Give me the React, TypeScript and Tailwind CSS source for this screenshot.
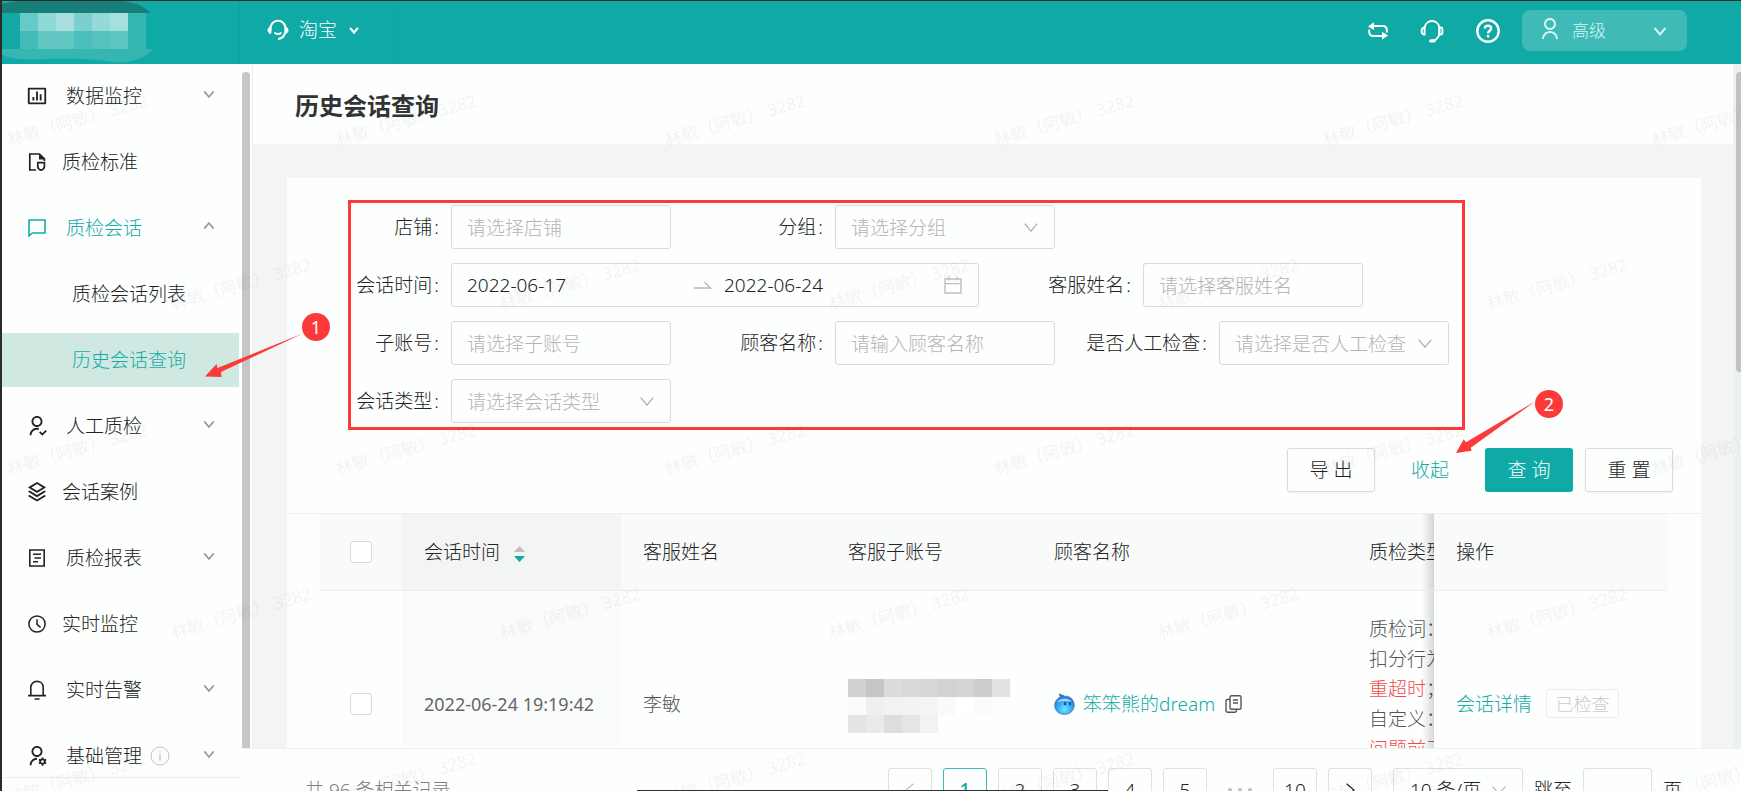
import type { ReactNode } from "react";
import {
  RiBarChartBoxLine,
  RiStackLine,
  RiUserFollowLine,
  RiUserLine,
  RiUserSettingsLine,
} from "react-icons/ri";

const Chevron = ({ className }: { className: string }) => (
  <svg viewBox="0 0 14 14" className={className} fill="none" stroke="currentColor">
    <path d="M1.5 4 L7 10.5 L12.5 4" />
  </svg>
);

const FileShieldIcon = () => (
  <svg viewBox="0 0 18 18" className="h-[18px] w-[18px]" fill="none" stroke="currentColor" strokeWidth="1.7">
    <path d="M8 17 H1.8 V1 H11.5 L16.4 5.8 V8" />
    <path d="M11 1 L16.8 6.5 H11 Z" fill="currentColor" stroke="none" />
    <path d="M9.8 9.6 H16.4 V13.4 C16.4 15.4 14.6 16.6 13.1 17.2 C11.6 16.6 9.8 15.4 9.8 13.4 Z" />
  </svg>
);

const ChatIcon = () => (
  <svg viewBox="0 0 18 18" className="h-[18px] w-[18px]" fill="none" stroke="currentColor" strokeWidth="1.6">
    <path d="M1 1 H17 V14 H4.4 L1 16.8 Z" />
  </svg>
);

const ReportIcon = () => (
  <svg viewBox="0 0 18 18" className="h-[18px] w-[18px]" fill="none" stroke="currentColor" strokeWidth="1.6">
    <path d="M1.8 1 H16.2 V17 H1.8 Z" />
    <path d="M5 5.2 H13 M6.5 9 H13 M5 12.8 H10" />
  </svg>
);

const ClockIcon = () => (
  <svg viewBox="0 0 18 18" className="h-[18px] w-[18px]" fill="none" stroke="currentColor" strokeWidth="1.5">
    <circle cx="9" cy="9" r="8.1" />
    <path d="M9 4.2 V9.4 L12.6 12.4" />
  </svg>
);

const BellIcon = () => (
  <svg viewBox="0 0 20 20" className="h-5 w-5 shrink-0" fill="none" stroke="currentColor" strokeWidth="1.6">
    <path d="M3.8 15 V7.4 C3.8 3.8 6.4 1.4 10 1.4 C13.6 1.4 16.2 3.8 16.2 7.4 V15" />
    <path d="M1 15.6 H19 M7.5 19 H12.5" />
  </svg>
);

const InfoIcon = () => (
  <svg viewBox="0 0 20 20" className="h-5 w-5 text-[#c4c4c4]" fill="none" stroke="currentColor">
    <circle cx="10" cy="10" r="9" />
    <path d="M10 8.5 V15 M10 5 V6.6" strokeWidth="1.4" />
  </svg>
);

const HeadsetIcon = () => (
  <svg viewBox="0 0 22 22" className="h-[22px] w-[22px]" fill="none" stroke="currentColor" strokeWidth="2">
    <path d="M3.5 12 C2.6 5.5 6.6 1.8 11 1.8 C15.4 1.8 19.4 5.5 18.5 12 C17.8 16.4 15.4 19.6 11 20" />
    <path d="M3.8 8 V14.5 C2 14.5 1 13 1 11.2 C1 9.5 2 8 3.8 8 Z M18.2 8 V14.5 C20 14.5 21 13 21 11.2 C21 9.5 20 8 18.2 8 Z" fill="currentColor" strokeWidth="1" />
    <path d="M7.5 13.5 C9 15.6 13 15.6 14.5 13.5" />
  </svg>
);

const SupportIcon = () => (
  <svg viewBox="0 0 24 24" className="h-6 w-6" fill="none" stroke="currentColor" strokeWidth="1.9">
    <path d="M4.6 9 C5 4.6 8.3 2 12 2 C15.7 2 19 4.6 19.4 9 V13.5 C19.2 17.5 17 20.6 13.5 21.6" />
    <path d="M4.6 8.5 V15.5 C2.6 15.5 1.6 14 1.6 12 C1.6 10 2.6 8.5 4.6 8.5 Z M19.4 8.5 H21 Q22.4 8.5 22.4 10 V14 Q22.4 15.5 21 15.5 H19.4 Z" />
    <path d="M10.8 21.9 H14" strokeWidth="3.4" strokeLinecap="round" />
  </svg>
);

const SwapIcon = () => (
  <svg viewBox="0 0 20 18" className="h-[18px] w-5" fill="none" stroke="currentColor" strokeWidth="2">
    <path d="M3 4 H14.5 Q18.8 4 18.8 8 V10.5" />
    <path d="M17 14 H5.5 Q1.2 14 1.2 10 V7.5" />
    <path d="M0 4.4 L6 0.2 V8 Z M20 13.6 L14 9.8 V17.6 Z" fill="currentColor" stroke="none" />
  </svg>
);

const HelpIcon = () => (
  <svg viewBox="0 0 24 24" className="h-6 w-6" fill="none" stroke="currentColor" strokeWidth="2.4">
    <circle cx="12" cy="12" r="10.7" />
    <path d="M8.9 9.6 C8.9 5.6 15.1 5.7 15.1 9.5 C15.1 11.8 12 11.8 12 14.4" />
    <path d="M12 16 V18.4" />
  </svg>
);

const CalendarIcon = () => (
  <svg viewBox="0 0 18 18" className="h-[18px] w-[18px] shrink-0 text-[#bfbfbf]" fill="none" stroke="currentColor" strokeWidth="1.4">
    <path d="M1 3 H17 V17 H1 Z M1 7.6 H17 M5 0.5 V4.6 M13 0.5 V4.6" />
  </svg>
);

const CopyIcon = () => (
  <svg viewBox="0 0 17 18" className="h-[18px] w-[17px]" fill="none" stroke="currentColor" strokeWidth="1.4">
    <rect x="5" y="0.8" width="11" height="13.4" rx="1.5" />
    <path d="M5 4.5 H2.4 Q1 4.5 1 6 V15.8 Q1 17.2 2.4 17.2 H10 Q11.4 17.2 11.4 15.8 V14.2 M8 5 H13 M8 8 H13" />
  </svg>
);

const WangwangIcon = () => (
  <svg viewBox="0 0 21 22" className="h-[22px] w-[21px]">
    <defs>
      <radialGradient id="drop" cx="0.5" cy="0.75" r="0.7">
        <stop offset="0" stopColor="#6fe6ff" />
        <stop offset="0.6" stopColor="#2f9df2" />
        <stop offset="1" stopColor="#2767c4" />
      </radialGradient>
    </defs>
    <path d="M5.5 0.6 C6.5 2.4 9 1.6 10.5 3.2 C16 2.6 20.2 6.8 20.2 12 C20.2 17.8 15.8 21.4 10.4 21.4 C5 21.4 0.7 17.8 0.7 12.2 C0.7 8.6 3.2 5.4 6.4 4 C5.8 2.8 5.2 2 5.5 0.6 Z" fill="url(#drop)" stroke="#3b6ea8" strokeWidth="0.7" />
    <path d="M3.2 9.4 C5 5 15 4.2 17.8 8.8 C13 7.6 8 7.8 3.2 9.4 Z" fill="#a9d6fb" />
    <path d="M11 9.2 V12 M15.8 9.2 V12" stroke="#123c86" strokeWidth="1.7" />
  </svg>
);

const logoCells = [
  ["#12a9a5", "#66cbc8", "#90d8d6", "#a8dfde", "#7bd0ce", "#94dad7", "#a5e0df", "#35b6b3"],
  ["#12a9a5", "#45bbb7", "#63c7c3", "#63c7c3", "#4bbfbc", "#56c2be", "#60c6c4", "#35b6b3"],
];

const Logo = () => (
  <svg viewBox="0 0 152 63" className="block h-[63px] w-[152px]">
    <path d="M0 3 Q18 -2 36 0 H118 Q138 1 149 12 H0 Z" fill="#177e7a" />
    <path d="M0 48 H151 Q138 63 112 61 Q80 56 46 58 Q12 60 0 54 Z" fill="#35b6b3" />
    {logoCells.map((row, r) =>
      row.map((fill, c) => (
        <rect key={`${r}-${c}`} x={c * 18} y={12 + r * 18} width="18" height="18" fill={fill} shapeRendering="crispEdges" />
      ))
    )}
  </svg>
);

const accountCells = [
  ["#d1d1d1", "#c6c6c6", "#dcdcdc", "#d9d9d9", "#d7d7d7", "#d2d2d2", "#d4d4d4", "#cdcdcd", "#e2e2e2"],
  ["#fbfbfb", "#efefef", "#f2f2f2", "#f3f3f3", "#f4f4f4", "#fafafa", "#ffffff", "#fbfbfb", "#fdfdfd"],
  ["#e4e4e4", "#eaeaea", "#dddddd", "#e6e4e4", "#f2f2f2"],
];

const MaskedAccount = () => (
  <svg viewBox="0 0 162 54" className="mt-1 block h-[54px] w-[162px]" shapeRendering="crispEdges">
    {accountCells.map((row, r) =>
      row.map((fill, c) => (
        <rect key={`${r}-${c}`} x={c * 18} y={r * 18} width="18" height="18" fill={fill} />
      ))
    )}
  </svg>
);

interface MenuItemProps {
  icon: ReactNode;
  label: string;
  arrow?: "up" | "down";
  info?: boolean;
  active?: boolean;
}

const MenuItem = ({ icon, label, arrow, info, active }: MenuItemProps) => (
  <li>
    <a
      href="#"
      className={
        active
          ? "flex h-[54px] items-center pl-[26px] pr-[25px] text-[#16aaa6]"
          : "flex h-[54px] items-center pl-[26px] pr-[25px] text-[#222]"
      }
    >
      <span className="flex w-[18px] justify-center">{icon}</span>
      <span className={arrow ? "ml-5" : "ml-4"}>{label}</span>
      {info && (
        <span className="ml-2">
          <InfoIcon />
        </span>
      )}
      {arrow && (
        <Chevron
          className={
            arrow === "up"
              ? "mb-1 ml-auto h-3 w-3 rotate-180 stroke-2 text-[#999]"
              : "mb-1 ml-auto h-3 w-3 stroke-2 text-[#999]"
          }
        />
      )}
    </a>
  </li>
);

interface FieldProps {
  id: string;
  label: string;
  first?: boolean;
  children: ReactNode;
}

const Field = ({ id, label, first, children }: FieldProps) => (
  <div className="flex h-11 items-center">
    <label
      htmlFor={id}
      className={first ? "w-[100px] shrink-0 pr-3 text-right" : "w-[164px] shrink-0 pr-3 text-right"}
    >
      {label}
      <span className="ml-0.5">:</span>
    </label>
    {children}
  </div>
);

const TextBox = ({ id, placeholder }: { id: string; placeholder: string }) => (
  <input
    id={id}
    placeholder={placeholder}
    className="h-11 w-[220px] rounded-[3px] border border-[#d9dbdb] bg-transparent px-[15px] pt-0.5 placeholder:text-[#b5b5b5]"
  />
);

const SelectBox = ({ id, placeholder, wide }: { id: string; placeholder: string; wide?: boolean }) => (
  <div className="relative">
    <select
      id={id}
      className={
        wide
          ? "h-11 w-[230px] appearance-none rounded-[3px] border border-[#d9dbdb] bg-transparent px-[15px] pt-0.5 text-[#b5b5b5]"
          : "h-11 w-[220px] appearance-none rounded-[3px] border border-[#d9dbdb] bg-transparent px-[15px] pt-0.5 text-[#b5b5b5]"
      }
    >
      <option>{placeholder}</option>
    </select>
    <Chevron className="pointer-events-none absolute right-4 top-[14px] h-4 w-4 text-[#a8a8a8]" />
  </div>
);

// repeated user name over the whole page
const Watermark = () => (
  <svg className="pointer-events-none absolute inset-0 z-30 h-full w-full" aria-hidden="true">
    <defs>
      <pattern id="wm" width="329" height="329" patternUnits="userSpaceOnUse">
        <g fill="#000" fillOpacity="0.042" fontSize="17" fontWeight="400" style={{ whiteSpace: "pre" }}>
          <text transform="translate(7 145) rotate(-16)">林敏（阿敏） 3282</text>
          <text transform="translate(171 309) rotate(-16)">林敏（阿敏） 3282</text>
        </g>
      </pattern>
    </defs>
    <rect y="64" width="100%" height="100%" fill="url(#wm)" />
  </svg>
);

const pages = ["1", "2", "3", "4", "5"];

export default function App() {
  return (
    <div className="relative flex h-screen flex-col overflow-hidden border-l-2 border-t border-[#2a2b2b] bg-[#fdfefe] font-['Noto_Sans','Noto_Sans_CJK_SC',sans-serif] text-[19px] font-light leading-[30px] text-[#222]">
      <header className="flex h-[63px] shrink-0 bg-[#0fa9a6] text-white">
        <div className="w-[238px] border-r border-[#0da19e]">
          <Logo />
        </div>
        <button className="flex w-[155px] items-center border-r border-[#0ea5a2] pb-1.5 pl-[27px]">
          <HeadsetIcon />
          <span className="ml-2.5">淘宝</span>
          <Chevron className="ml-3 h-2.5 w-2.5 stroke-[3px]" />
        </button>
        <div className="ml-auto flex items-center gap-8 pb-1 pr-[54px]">
          <button aria-label="切换">
            <SwapIcon />
          </button>
          <button aria-label="客服">
            <SupportIcon />
          </button>
          <button aria-label="帮助">
            <HelpIcon />
          </button>
          <button className="-ml-2.5 flex h-[41px] w-[165px] items-center rounded-lg bg-[#40bab7] px-4 text-[17px] text-[#d3f6f4]">
            <RiUserLine className="mb-1 h-6 w-6" />
            <span className="ml-2.5">高级</span>
            <Chevron className="ml-auto mr-1 h-3.5 w-3.5 stroke-2" />
          </button>
        </div>
      </header>

      <div className="flex min-h-0 flex-1">
        <aside className="relative z-20 flex w-[238px] shrink-0 flex-col">
          <nav className="min-h-0 flex-1 pt-[5px]">
            <ul className="flex flex-col gap-3">
              <MenuItem icon={<RiBarChartBoxLine className="h-[22px] w-[22px] shrink-0" />} label="数据监控" arrow="down" />
              <MenuItem icon={<FileShieldIcon />} label="质检标准" />
              <MenuItem icon={<ChatIcon />} label="质检会话" arrow="up" active />
              <li>
                <a href="#" className="flex h-[54px] items-center pl-[70px]">
                  质检会话列表
                </a>
              </li>
              <li className="relative">
                <a href="#" className="mr-px flex h-[54px] items-center bg-[#d0e8e2] pl-[70px] text-[#16aaa6]">
                  历史会话查询
                </a>
                {/* step 1 */}
                <svg viewBox="0 0 104 46" className="absolute left-[203px] top-0 h-[46px] w-[104px]">
                  <path d="M0 43.5 L11.5 31 L12.5 35 L99 0 L16 39 L16.5 44 Z" fill="#fc3a3a" />
                </svg>
                <span className="absolute -top-5 left-[300px] flex h-7 w-7 items-center justify-center rounded-full bg-[#fc3a3a] text-[18px] font-normal text-white">
                  1
                </span>
              </li>
              <MenuItem icon={<RiUserFollowLine className="h-[22px] w-[22px] shrink-0" />} label="人工质检" arrow="down" />
              <MenuItem icon={<RiStackLine className="h-[22px] w-[22px] shrink-0" />} label="会话案例" />
              <MenuItem icon={<ReportIcon />} label="质检报表" arrow="down" />
              <MenuItem icon={<ClockIcon />} label="实时监控" />
              <MenuItem icon={<BellIcon />} label="实时告警" arrow="down" />
              <MenuItem icon={<RiUserSettingsLine className="h-[22px] w-[22px] shrink-0" />} label="基础管理" arrow="down" info />
            </ul>
          </nav>
          <div className="h-[14px] border-t border-[#ececec]" />
        </aside>

        <div className="flex min-w-0 flex-1 flex-col">
          <div className="flex min-h-0 flex-1">
            <div className="w-[13px] shrink-0 border-r border-[#eeefef] px-0.5 pt-2">
              <div className="h-full w-2 rounded-t bg-[#c6c6c6]" />
            </div>

            <main className="min-w-0 flex-1 overflow-hidden bg-[#f3f4f4]">
              <div className="flex h-20 items-center bg-[#fdfefe] pl-[42px] pt-1">
                <h1 className="text-[24px] font-bold text-[#333]">历史会话查询</h1>
              </div>

              <section className="ml-[34px] mr-8 mt-[34px] bg-[#fdfefe]">
                <form className="border-b border-[#eeefef] pb-[21px] pl-[61px] pr-7 pt-[22px]">
                  <div className="flex w-fit flex-col gap-[14px] border-[3px] border-[#fc3a3a] pb-1 pr-[13px] pt-0.5">
                    <div className="flex">
                      <Field id="shop" label="店铺" first>
                        <TextBox id="shop" placeholder="请选择店铺" />
                      </Field>
                      <Field id="group" label="分组">
                        <SelectBox id="group" placeholder="请选择分组" />
                      </Field>
                    </div>
                    <div className="flex">
                      <Field id="start" label="会话时间" first>
                        <div className="flex h-11 w-[528px] items-center rounded-[3px] border border-[#d9dbdb] px-[15px]">
                          <input id="start" defaultValue="2022-06-17" className="w-[227px] bg-transparent" />
                          <svg viewBox="0 0 18 10" className="h-2.5 w-[18px] shrink-0" fill="none" stroke="#b9b9b9" strokeWidth="1.4">
                            <path d="M0 8 H16.4 L10.5 2" />
                          </svg>
                          <input aria-label="结束时间" defaultValue="2022-06-24" className="ml-3 w-[220px] bg-transparent" />
                          <CalendarIcon />
                        </div>
                      </Field>
                      <Field id="staff" label="客服姓名">
                        <TextBox id="staff" placeholder="请选择客服姓名" />
                      </Field>
                    </div>
                    <div className="flex">
                      <Field id="sub" label="子账号" first>
                        <TextBox id="sub" placeholder="请选择子账号" />
                      </Field>
                      <Field id="customer" label="顾客名称">
                        <TextBox id="customer" placeholder="请输入顾客名称" />
                      </Field>
                      <Field id="manual" label="是否人工检查">
                        <SelectBox id="manual" placeholder="请选择是否人工检查" wide />
                      </Field>
                    </div>
                    <Field id="type" label="会话类型" first>
                      <SelectBox id="type" placeholder="请选择会话类型" />
                    </Field>
                  </div>

                  <div className="mt-[18px] flex justify-end gap-3">
                    <button type="button" className="h-11 w-[88px] rounded-[3px] border border-[#d9dbdb] shadow-xs">
                      导 出
                    </button>
                    <div className="relative">
                      <button type="button" className="h-11 w-[86px] text-[#16aaa6]">
                        收起
                      </button>
                      {/* step 2 */}
                      <svg viewBox="0 0 80 52" className="absolute -top-[47px] left-[69px] h-[52px] w-20">
                        <path d="M0 52 L7.7 38.3 L10 41.3 L79.7 0 L14.7 46.7 L15.7 49.7 Z" fill="#fc3a3a" />
                      </svg>
                      <span className="absolute -top-[58px] left-[148px] flex h-7 w-7 items-center justify-center rounded-full bg-[#fc3a3a] text-[18px] font-normal text-white">
                        2
                      </span>
                    </div>
                    <button type="button" className="h-11 w-[88px] rounded-[3px] bg-[#0fa9a6] text-white">
                      查 询
                    </button>
                    <button type="button" className="h-11 w-[88px] rounded-[3px] border border-[#d9dbdb] shadow-xs">
                      重 置
                    </button>
                  </div>
                </form>

                <div className="overflow-hidden px-[33px]">
                  <table className="w-full table-fixed text-left">
                    <colgroup>
                      <col className="w-[82px]" />
                      <col className="w-[219px]" />
                      <col className="w-[205px]" />
                      <col className="w-[206px]" />
                      <col className="w-[315px]" />
                      <col />
                      <col className="w-[234px]" />
                    </colgroup>
                    <thead>
                      <tr className="h-[76px] border-b border-[#ececec] bg-[#f9fafa]">
                        <th className="pl-[30px]">
                          <input type="checkbox" aria-label="全选" className="block h-[22px] w-[22px] appearance-none rounded-[3px] border border-[#d9dbdb] bg-white" />
                        </th>
                        <th className="bg-[#f3f4f4] pl-[22px] font-light">
                          <span className="flex items-center">
                            会话时间
                            <svg viewBox="0 0 11 18" className="ml-[14px] mt-1 h-[18px] w-[11px]">
                              <path d="M0 7 L5.5 1 L11 7 Z" fill="#bfbfbf" />
                              <path d="M0 11 L5.5 17 L11 11 Z" fill="#0fa9a6" />
                            </svg>
                          </span>
                        </th>
                        <th className="pl-[22px] font-light">客服姓名</th>
                        <th className="pl-[22px] font-light">客服子账号</th>
                        <th className="pl-[22px] font-light">顾客名称</th>
                        <th className="overflow-hidden whitespace-nowrap pl-[22px] font-light">质检类型</th>
                        <th className="relative bg-[#f9fafa] pl-[22px] font-light">
                          <span className="absolute inset-y-0 -left-3 w-3 bg-gradient-to-l from-black/15 to-transparent" />
                          操作
                        </th>
                      </tr>
                    </thead>
                    <tbody>
                      <tr className="text-[#555]">
                        <td className="pl-[30px]">
                          <input type="checkbox" aria-label="选择会话" className="block h-[22px] w-[22px] appearance-none rounded-[3px] border border-[#d9dbdb] bg-white" />
                        </td>
                        <td className="bg-[#fafbfb] pl-[22px] text-[18px] font-normal text-[#666]">2022-06-24 19:19:42</td>
                        <td className="pl-[22px]">李敏</td>
                        <td className="pl-[22px]">
                          <MaskedAccount />
                        </td>
                        <td className="pl-[22px]">
                          <span className="flex items-center">
                            <WangwangIcon />
                            <a href="#" className="ml-2 text-[#16aaa6]">
                              笨笨熊的dream
                            </a>
                            <button aria-label="复制" className="ml-2.5">
                              <CopyIcon />
                            </button>
                          </span>
                        </td>
                        <td className="overflow-hidden whitespace-nowrap py-[23px] pl-[22px]">
                          质检词：无
                          <br />
                          扣分行为：
                          <br />
                          <span className="text-[#f24b4b]">重超时</span>；
                          <br />
                          自定义：
                          <br />
                          <span className="text-[#f24b4b]">问题前三</span>
                          <br />
                          &nbsp;
                        </td>
                        <td className="relative pl-[22px]">
                          <span className="absolute inset-y-0 -left-3 w-3 bg-gradient-to-l from-black/15 to-transparent" />
                          <span className="flex items-center">
                            <a href="#" className="text-[#16aaa6]">
                              会话详情
                            </a>
                            <button disabled className="ml-[14px] flex h-[29px] w-[73px] items-center justify-center rounded-[3px] border border-[#ebecec] text-[18px] text-[#cccccc]">
                              已检查
                            </button>
                          </span>
                        </td>
                      </tr>
                    </tbody>
                  </table>
                </div>
              </section>
            </main>

            <div className="w-2 shrink-0 overflow-hidden bg-[#edf1f4] pl-[3px] pt-2">
              <div className="h-[300px] w-2 rounded bg-[#c1c1c1]" />
            </div>
          </div>

          <footer className="flex h-[43px] shrink-0 items-start justify-between overflow-hidden border-t border-[#eeefef] pl-[65px] pr-[59px] pt-[19px]">
            <span className="flex h-11 items-center text-[#808080]">共 96 条相关记录</span>
            <div className="flex h-11 items-center gap-[11px]">
              <button aria-label="上一页" className="flex h-11 w-11 items-center justify-center rounded-[3px] border border-[#dfe0e0] text-[#bfbfbf]">
                <Chevron className="h-4 w-4 rotate-90" />
              </button>
              {pages.map((page) => (
                <button
                  key={page}
                  className={
                    page === "1"
                      ? "h-11 w-11 rounded-[3px] border border-[#3cb9b5] font-medium text-[#16aaa6]"
                      : "h-11 w-11 rounded-[3px] border border-[#dfe0e0]"
                  }
                >
                  {page}
                </button>
              ))}
              <span className="flex w-11 justify-center gap-1.5">
                <i className="h-1 w-1 rounded-full bg-[#bfbfbf]" />
                <i className="h-1 w-1 rounded-full bg-[#bfbfbf]" />
                <i className="h-1 w-1 rounded-full bg-[#bfbfbf]" />
              </span>
              <button className="h-11 w-11 rounded-[3px] border border-[#dfe0e0]">10</button>
              <button aria-label="下一页" className="flex h-11 w-11 items-center justify-center rounded-[3px] border border-[#dfe0e0]">
                <Chevron className="h-4 w-4 -rotate-90" />
              </button>
              <div className="relative ml-2.5">
                <select aria-label="每页条数" className="h-11 w-[130px] appearance-none rounded-[3px] border border-[#dfe0e0] bg-transparent pl-4">
                  <option>10 条/页</option>
                </select>
                <Chevron className="pointer-events-none absolute right-4 top-[14px] h-4 w-4 text-[#b5b5b5]" />
              </div>
              <label htmlFor="jump">跳至</label>
              <input id="jump" className="h-11 w-[69px] rounded-[3px] border border-[#dfe0e0] bg-transparent px-3" />
              <span>页</span>
            </div>
          </footer>
        </div>
      </div>

      <div className="absolute bottom-0 left-[635px] h-px w-[471px] bg-[#333]" />
      <Watermark />
    </div>
  );
}
